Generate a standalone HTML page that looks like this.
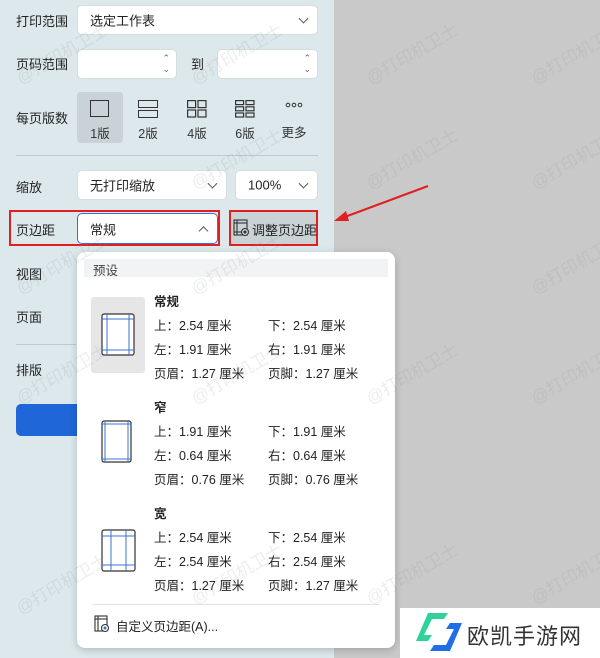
<!DOCTYPE html><html><head><meta charset="utf-8"><style>
*{box-sizing:border-box;margin:0;padding:0}
body{width:600px;height:658px;position:relative;overflow:hidden;background:#c9c9c9;font-family:"Liberation Sans","Noto Sans CJK SC",sans-serif;font-size:13px;color:#222}
.a{position:absolute}
#left{left:0;top:0;width:334px;height:658px;background:#dce8ec}
.lbl{position:absolute;left:16px;font-size:13px;color:#222}
.box{position:absolute;background:#fff;border:1px solid #d6dde0;border-radius:5px}
.box span{position:absolute;left:12px;top:50%;transform:translateY(-50%);font-size:13px}
.chev{position:absolute;right:10px;top:50%;width:7px;height:7px;border-right:1.2px solid #555;border-bottom:1.2px solid #555;transform:translateY(-70%) rotate(45deg)}
.up{transform:translateY(-20%) rotate(-135deg)}
.tile{position:absolute;top:92px;width:46px;height:51px;text-align:center;font-size:12.5px;color:#333}
.tile .t{position:absolute;left:0;right:0;top:31px}
.div{position:absolute;left:16px;width:302px;height:1px;background:#bfc9cc}
.dd{position:absolute;left:77px;top:252px;width:318px;height:396px;background:#fff;border-radius:8px;box-shadow:0 2px 8px rgba(0,0,0,.2)}
.v{position:absolute;font-size:12.5px;color:#222;white-space:nowrap}
.b{font-weight:bold}
.wm{position:absolute;color:rgba(140,150,155,.17);font-size:17px;transform:rotate(-30deg);white-space:nowrap}
</style></head><body>
<div id="left" class="a"></div>
<div class="lbl" style="top:11px">打印范围</div>
<div class="box" style="left:77px;top:5px;width:241px;height:30px"><span>选定工作表</span><i class="chev"></i></div>
<div class="lbl" style="top:54px">页码范围</div>
<div class="box" style="left:77px;top:49px;width:100px;height:30px"><span style="left:auto;right:6px;font-size:9px;color:#666;line-height:11px">⌃<br>⌄</span></div>
<div class="a" style="left:191px;top:54px">到</div>
<div class="box" style="left:217px;top:49px;width:101px;height:30px"><span style="left:auto;right:6px;font-size:9px;color:#666;line-height:11px">⌃<br>⌄</span></div>
<div class="lbl" style="top:108px">每页版数</div>
<div class="tile" style="left:77px;background:#c9d3d7;border-radius:4px"><div class="a" style="left:13px;top:8px;width:19px;height:17px;border:1.2px solid #333"></div><div class="t">1版</div></div>
<div class="tile" style="left:125px"><div class="a" style="left:13px;top:8px;width:20px;height:8px;border:1.2px solid #333"></div><div class="a" style="left:13px;top:18px;width:20px;height:8px;border:1.2px solid #333"></div><div class="t">2版</div></div>
<div class="tile" style="left:174px"><svg class="a" style="left:13px;top:8px" width="20" height="18" fill="none" stroke="#333" stroke-width="1.2"><rect x=".6" y=".6" width="8" height="7"/><rect x="11" y=".6" width="8" height="7"/><rect x=".6" y="10" width="8" height="7"/><rect x="11" y="10" width="8" height="7"/></svg><div class="t">4版</div></div>
<div class="tile" style="left:222px"><svg class="a" style="left:13px;top:8px" width="20" height="18" fill="none" stroke="#333" stroke-width="1.2"><rect x=".6" y=".6" width="8" height="4"/><rect x="11" y=".6" width="8" height="4"/><rect x=".6" y="6.8" width="8" height="4"/><rect x="11" y="6.8" width="8" height="4"/><rect x=".6" y="13" width="8" height="4"/><rect x="11" y="13" width="8" height="4"/></svg><div class="t">6版</div></div>
<div class="tile" style="left:271px"><svg class="a" style="left:14px;top:10px" width="18" height="6" fill="none" stroke="#333" stroke-width="1"><circle cx="3" cy="3" r="1.8"/><circle cx="9" cy="3" r="1.8"/><circle cx="15" cy="3" r="1.8"/></svg><div class="t" style="top:30px">更多</div></div>
<div class="div" style="top:155px"></div>
<div class="lbl" style="top:177px">缩放</div>
<div class="box" style="left:77px;top:170px;width:150px;height:30px"><span>无打印缩放</span><i class="chev"></i></div>
<div class="box" style="left:235px;top:170px;width:83px;height:30px"><span>100%</span><i class="chev"></i></div>
<div class="a" style="left:9px;top:210px;width:211px;height:36px;border:2px solid #e02020"></div>
<div class="lbl" style="top:220px">页边距</div>
<div class="box" style="left:77px;top:213px;width:141px;height:31px;border-color:#3b6fd6"><span>常规</span><i class="chev up"></i></div>
<div class="a" style="left:229px;top:210px;width:89px;height:36px;border:2px solid #e02020;background:#c9d2d5"></div>
<svg class="a" style="left:233px;top:219px" width="17" height="18" fill="none" stroke="#333" stroke-width="1.1"><rect x="1" y="1" width="13" height="15"/><line x1="4" y1="1" x2="4" y2="16"/><line x1="1" y1="4" x2="14" y2="4"/><line x1="1" y1="13" x2="8" y2="13"/><circle cx="12" cy="13" r="3.5" fill="#c9d2d5"/><circle cx="12" cy="13" r="1" fill="#333"/></svg>
<div class="a" style="left:252px;top:220px">调整页边距</div>
<div class="lbl" style="top:264px">视图</div>
<div class="lbl" style="top:307px">页面</div>
<div class="div" style="top:344px;width:60px"></div>
<div class="lbl" style="top:360px">排版</div>
<div class="a" style="left:16px;top:404px;width:70px;height:32px;background:#1f67d8;border-radius:5px"></div>
<svg class="a" style="left:330px;top:180px" width="104" height="48"><line x1="98" y1="6" x2="12" y2="38" stroke="#e02020" stroke-width="2.2"/><polygon points="4,41 16,31 19,41" fill="#e02020"/></svg>
<div class="dd">
<div class="a" style="left:7px;top:7px;width:304px;height:18px;background:#f2f3f5"></div>
<div class="v" style="left:16px;top:8px;color:#444">预设</div>
<div class="a" style="left:14px;top:45px;width:54px;height:76px;background:#e6e6e6;border-radius:3px"></div>
<svg class="a" style="left:24px;top:61px" width="36" height="44"><rect x="1" y="1" width="32" height="41" rx="2" fill="#fff" stroke="#333" stroke-width="1.2"/><g stroke="#3b73d6" stroke-width="1"><line x1="6" y1="1" x2="6" y2="42"/><line x1="28" y1="1" x2="28" y2="42"/><line x1="1" y1="6" x2="33" y2="6"/><line x1="1" y1="37" x2="33" y2="37"/></g></svg>
<div class="v b" style="left:77px;top:39px">常规</div>
<div class="v" style="left:77px;top:63px">上：2.54 厘米</div><div class="v" style="left:191px;top:63px">下：2.54 厘米</div>
<div class="v" style="left:77px;top:87px">左：1.91 厘米</div><div class="v" style="left:191px;top:87px">右：1.91 厘米</div>
<div class="v" style="left:77px;top:111px">页眉：1.27 厘米</div><div class="v" style="left:191px;top:111px">页脚：1.27 厘米</div>
<svg class="a" style="left:24px;top:168px" width="32" height="44"><rect x="1" y="1" width="29" height="41" rx="2" fill="#fff" stroke="#333" stroke-width="1.2"/><g stroke="#3b73d6" stroke-width="1"><line x1="4" y1="1" x2="4" y2="42"/><line x1="27" y1="1" x2="27" y2="42"/><line x1="1" y1="4" x2="30" y2="4"/><line x1="1" y1="39" x2="30" y2="39"/></g></svg>
<div class="v b" style="left:77px;top:145px">窄</div>
<div class="v" style="left:77px;top:169px">上：1.91 厘米</div><div class="v" style="left:191px;top:169px">下：1.91 厘米</div>
<div class="v" style="left:77px;top:193px">左：0.64 厘米</div><div class="v" style="left:191px;top:193px">右：0.64 厘米</div>
<div class="v" style="left:77px;top:217px">页眉：0.76 厘米</div><div class="v" style="left:191px;top:217px">页脚：0.76 厘米</div>
<svg class="a" style="left:24px;top:277px" width="36" height="44"><rect x="1" y="1" width="33" height="41" rx="2" fill="#fff" stroke="#333" stroke-width="1.2"/><g stroke="#3b73d6" stroke-width="1"><line x1="10" y1="1" x2="10" y2="42"/><line x1="25" y1="1" x2="25" y2="42"/><line x1="1" y1="7" x2="34" y2="7"/><line x1="1" y1="36" x2="34" y2="36"/></g></svg>
<div class="v b" style="left:77px;top:251px">宽</div>
<div class="v" style="left:77px;top:275px">上：2.54 厘米</div><div class="v" style="left:191px;top:275px">下：2.54 厘米</div>
<div class="v" style="left:77px;top:299px">左：2.54 厘米</div><div class="v" style="left:191px;top:299px">右：2.54 厘米</div>
<div class="v" style="left:77px;top:323px">页眉：1.27 厘米</div><div class="v" style="left:191px;top:323px">页脚：1.27 厘米</div>
<div class="a" style="left:16px;top:352px;width:286px;height:1px;background:#e2e2e2"></div>
<svg class="a" style="left:17px;top:363px" width="16" height="18" fill="none" stroke="#333" stroke-width="1.1"><rect x="1" y="1" width="12" height="15"/><line x1="4" y1="1" x2="4" y2="16"/><line x1="1" y1="4" x2="13" y2="4"/><circle cx="11" cy="13" r="3.5" fill="#fff"/><circle cx="11" cy="13" r="1" fill="#3b73d6" stroke="#3b73d6"/></svg>
<div class="v" style="left:39px;top:364px">自定义页边距(A)...</div>
</div>
<div class="a" style="left:400px;top:608px;width:200px;height:50px;background:#fff"></div>
<svg class="a" style="left:414px;top:611px" width="50" height="42"><path d="M14 2h20l-4 6H18L10 24h8l-4 6H2z" fill="#2fd39a"/><path d="M36 12h12L36 40H16l4-6h12l8-16h-8z" fill="#1f6ee8"/></svg>
<div class="a" style="left:467px;top:619px;font-size:22px;color:#333;letter-spacing:1px">欧凯手游网</div>
<div class="wm" style="left:10px;top:40px">@打印机卫士</div>
<div class="wm" style="left:185px;top:40px">@打印机卫士</div>
<div class="wm" style="left:360px;top:40px">@打印机卫士</div>
<div class="wm" style="left:525px;top:40px">@打印机卫士</div>
<div class="wm" style="left:185px;top:145px">@打印机卫士</div>
<div class="wm" style="left:360px;top:145px">@打印机卫士</div>
<div class="wm" style="left:525px;top:145px">@打印机卫士</div>
<div class="wm" style="left:10px;top:250px">@打印机卫士</div>
<div class="wm" style="left:185px;top:250px">@打印机卫士</div>
<div class="wm" style="left:525px;top:250px">@打印机卫士</div>
<div class="wm" style="left:10px;top:360px">@打印机卫士</div>
<div class="wm" style="left:185px;top:360px">@打印机卫士</div>
<div class="wm" style="left:360px;top:360px">@打印机卫士</div>
<div class="wm" style="left:525px;top:360px">@打印机卫士</div>
<div class="wm" style="left:10px;top:570px">@打印机卫士</div>
<div class="wm" style="left:185px;top:560px">@打印机卫士</div>
<div class="wm" style="left:360px;top:560px">@打印机卫士</div>
<div class="wm" style="left:525px;top:560px">@打印机卫士</div>
</body></html>
